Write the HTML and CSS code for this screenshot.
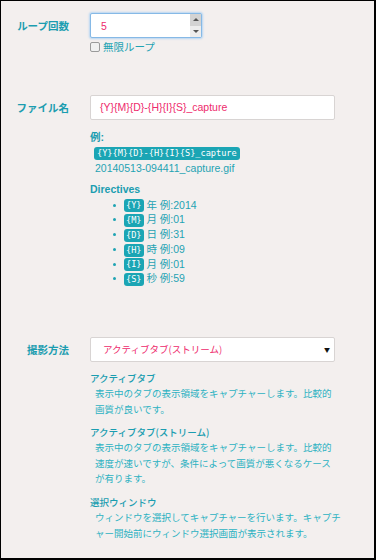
FILE: index.html
```html
<!DOCTYPE html>
<html lang="ja">
<head>
    <meta charset="UTF-8">
    <title>キャプチャー設定</title>
    <link rel="stylesheet" href="styles.css">
</head>
<body>
<div class="frame">
    <div class="row row-loop">
        <div class="label">ループ回数</div>
        <div class="field">
            <div class="number">
                <span class="value">5</span>
                <span class="spin">
                    <span class="spin-up"><i class="arrow-up"></i></span>
                    <span class="spin-down"><i class="arrow-down"></i></span>
                </span>
            </div>
            <div class="check"><span class="box"></span>無限ループ</div>
        </div>
    </div>

    <div class="row row-file">
        <div class="label">ファイル名</div>
        <div class="field">
            <div class="text-input">{Y}{M}{D}-{H}{I}{S}_capture</div>
            <div class="example">
                <div class="title">例:</div>
                <div class="sample"><code class="tag">{Y}{M}{D}-{H}{I}{S}_capture</code></div>
                <div class="sample-out">20140513-094411_capture.gif</div>
                <div class="title directives">Directives</div>
                <ul class="dir-list">
                    <li><code class="tag">{Y}</code> 年 例:2014</li>
                    <li><code class="tag">{M}</code> 月 例:01</li>
                    <li><code class="tag">{D}</code> 日 例:31</li>
                    <li><code class="tag">{H}</code> 時 例:09</li>
                    <li><code class="tag">{I}</code> 月 例:01</li>
                    <li><code class="tag">{S}</code> 秒 例:59</li>
                </ul>
            </div>
        </div>
    </div>

    <div class="row row-method">
        <div class="label">撮影方法</div>
        <div class="field">
            <div class="select">アクティブタブ(ストリーム)<span class="caret">▼</span></div>
            <dl class="methods">
                <dt>アクティブタブ</dt>
                <dd>表示中のタブの表示領域をキャプチャーします。比較的<br>画質が良いです。</dd>
                <dt>アクティブタブ(ストリーム)</dt>
                <dd>表示中のタブの表示領域をキャプチャーします。比較的<br>速度が速いですが、条件によって画質が悪くなるケース<br>が有ります。</dd>
                <dt>選択ウィンドウ</dt>
                <dd>ウィンドウを選択してキャプチャーを行います。キャプチ<br>ャー開始前にウィンドウ選択画面が表示されます。</dd>
            </dl>
        </div>
    </div>
</div>
</body>
</html>
```
FILE: styles.css
```css
* {
    margin: 0;
    padding: 0;
    box-sizing: border-box;
}

body {
    background: #fff;
    font-family: "Liberation Sans", "Noto Sans CJK JP", sans-serif;
    font-size: 10.5px;
    color: #1fa3b3;
}

.frame {
    width: 376px;
    height: 560px;
    background: #f3efee;
    border-top: 1px solid #000;
    border-left: 1px solid #000;
    border-right: 2px solid #000;
    border-bottom: 2px solid #000;
    overflow: hidden;
}

.row {
    display: grid;
    grid-template-columns: 89px 1fr;
}

.label {
    text-align: right;
    padding-right: 21px;
    font-weight: bold;
    color: #1b9db0;
    font-family: "Noto Sans CJK JP", sans-serif;
    line-height: 25px;
}

/* ループ回数 */
.row-loop {
    padding-top: 12px;
}

.number {
    width: 112px;
    height: 25px;
    background: #fff;
    border: 1px solid #86b9e6;
    border-radius: 2px;
    box-shadow: 0 0 2px 1px #b7d6f2;
    display: flex;
    align-items: center;
}

.number .value {
    padding-left: 10px;
    color: #ee2a6c;
    flex: 1;
}

.spin {
    width: 11px;
    height: 23px;
    display: flex;
    flex-direction: column;
}

.spin-up, .spin-down {
    flex: 1;
    display: flex;
    align-items: center;
    justify-content: center;
}

.spin-up {
    background: #d3d3d3;
}

.spin-down {
    background: #ededed;
}

.arrow-up {
    border-left: 3px solid transparent;
    border-right: 3px solid transparent;
    border-bottom: 3px solid #555;
}

.arrow-down {
    border-left: 3px solid transparent;
    border-right: 3px solid transparent;
    border-top: 3px solid #555;
}

.check {
    display: flex;
    align-items: center;
    gap: 3px;
    margin-top: 3px;
    font-family: "Noto Sans CJK JP", sans-serif;
    font-size: 10.5px;
    line-height: 12px;
}

.check .box {
    width: 10px;
    height: 10px;
    border: 1px solid #9a9a9a;
    border-radius: 2px;
    background: #f0f0f0;
}

/* ファイル名 */
.row-file {
    padding-top: 42px;
}

.text-input {
    width: 245px;
    height: 25px;
    background: #fff;
    border: 1px solid #d8d4d3;
    border-radius: 2px;
    padding-left: 9px;
    line-height: 23px;
    color: #ee2a6c;
    font-size: 10.5px;
}

.example {
    padding-top: 10px;
}

.title {
    font-weight: bold;
    color: #1b9db0;
    line-height: 15px;
}

.sample {
    padding-left: 4px;
    line-height: 14px;
}

.tag {
    display: inline-block;
    background: #1ba5b4;
    color: #fff;
    font-family: "DejaVu Sans Mono", monospace;
    font-size: 8.6px;
    line-height: 13px;
    padding: 0 3px;
    border-radius: 3px;
    vertical-align: middle;
}

.sample-out {
    padding-left: 5px;
    line-height: 16px;
}

.directives {
    margin-top: 6px;
}

.dir-list {
    list-style: none;
    padding-left: 23px;
    padding-top: 1px;
}

.dir-list li {
    position: relative;
    padding-left: 11px;
    line-height: 14.6px;
}

.dir-list li:before {
    content: "";
    position: absolute;
    left: 0;
    top: 6px;
    width: 3px;
    height: 3px;
    border-radius: 50%;
    background: #1fa3b3;
}

.dir-list .tag {
    padding: 0 2px;
}

/* 撮影方法 */
.row-method {
    padding-top: 51px;
}

.select {
    position: relative;
    width: 245px;
    height: 25px;
    background: #fff;
    border: 1px solid #d8d4d3;
    border-radius: 2px;
    padding-left: 12px;
    line-height: 23px;
    color: #ee2a6c;
    font-family: "Noto Sans CJK JP", sans-serif;
    font-size: 9.5px;
}

.caret {
    position: absolute;
    right: 4px;
    top: 0;
    color: #111;
    font-size: 6px;
}

.methods {
    padding-top: 8px;
    font-family: "Noto Sans CJK JP", sans-serif;
    font-size: 9.5px;
}

.methods dt {
    color: #1b9db0;
    font-weight: 500;
    line-height: 16px;
}

.methods dd {
    color: #2cb2c2;
    padding-left: 5px;
    line-height: 15.6px;
    margin-bottom: 7px;
    white-space: nowrap;
}
```
